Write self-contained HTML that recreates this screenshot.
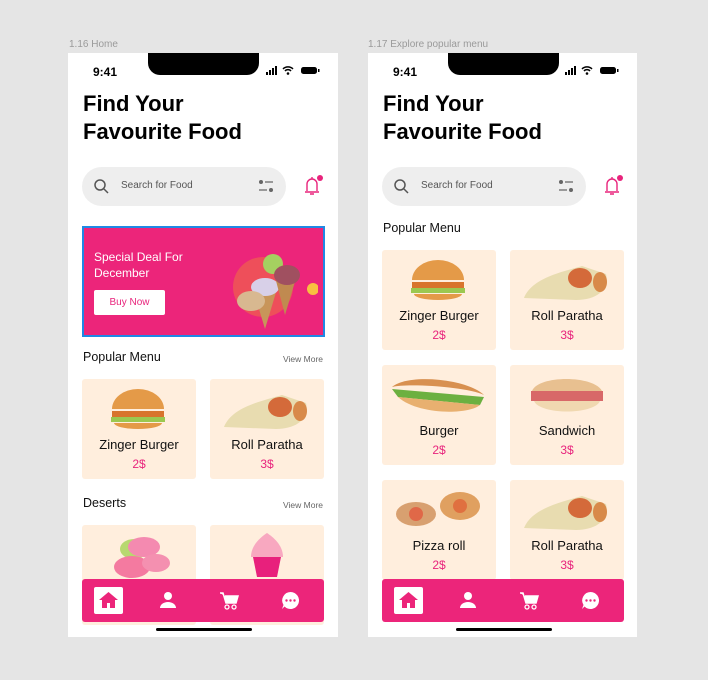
<!DOCTYPE html><html><head><style>
*{margin:0;padding:0;box-sizing:border-box}
body{width:708px;height:680px;background:#e5e5e5;font-family:"Liberation Sans",sans-serif;position:relative;overflow:hidden}
.lbl{position:absolute;top:39px;font-size:10px;color:#9a9a9a}
.ph{position:absolute;top:53px;width:270px;height:584px;background:#fff;overflow:hidden}
.notch{position:absolute;left:80px;top:0;width:111px;height:22px;background:#000;border-radius:0 0 12px 12px}
.time{position:absolute;left:25px;top:12px;font-size:12px;font-weight:bold}
.st{position:absolute;right:18px;top:13px}
h1{position:absolute;left:15px;top:37px;font-size:22px;line-height:28px;font-weight:bold;color:#000}
.search{position:absolute;left:14px;top:114px;width:204px;height:39px;background:#eee;border-radius:20px}
.search span{position:absolute;left:39px;top:13px;font-size:10px;color:#555}
.abs{position:absolute}
.sec{position:absolute;left:15px;font-size:12.5px;color:#111}
.vm{position:absolute;right:15px;font-size:8.5px;color:#666}
.card{position:absolute;width:114px;height:100px;background:#ffeedd;border-radius:3px;text-align:center}
.card .n{position:absolute;left:0;right:0;top:58px;font-size:13px;color:#111}
.card .p{position:absolute;left:0;right:0;top:78px;font-size:12px;color:#e8247c}
.nav{position:absolute;left:14px;top:526px;width:242px;height:43px;background:#ec257a;border-radius:3px}
.home{position:absolute;left:12px;top:8px;width:29px;height:27px;background:#fff;border-radius:2px}
.bar{position:absolute;left:88px;top:575px;width:96px;height:3px;background:#000;border-radius:2px}
</style></head><body>
<div class="lbl" style="left:69px">1.16 Home</div>
<div class="lbl" style="left:368px">1.17 Explore popular menu</div>

<!-- phone template -->
<div class="ph" style="left:68px">
<div class="notch"></div><div class="time">9:41</div>
<svg class="st" width="54" height="9" viewBox="0 0 54 9"><rect x="0" y="6" width="2" height="3"/><rect x="3" y="4" width="2" height="5"/><rect x="6" y="2" width="2" height="7"/><rect x="9" y="0" width="2" height="9"/><path d="M17 3a7 7 0 0 1 10 0M19 5a4 4 0 0 1 6 0" stroke="#000" stroke-width="1.5" fill="none"/><circle cx="22" cy="7.5" r="1.3"/><rect x="35" y="1" width="16" height="7" rx="2.5"/><rect x="52" y="3" width="1.5" height="3"/></svg>
<h1>Find Your<br>Favourite Food</h1>
<div class="search"><svg class="abs" style="left:12px;top:12px" width="15" height="15"><circle cx="6" cy="6" r="5" stroke="#555" stroke-width="1.5" fill="none"/><path d="M10 10l4 4" stroke="#555" stroke-width="1.5"/></svg><span>Search for Food</span><svg class="abs" style="left:176px;top:12px" width="16" height="15"><circle cx="3" cy="3" r="2" fill="#666"/><rect x="7" y="2" width="8" height="2" fill="#999"/><rect x="1" y="10" width="8" height="2" fill="#999"/><circle cx="13" cy="11" r="2" fill="#666"/></svg></div>
<svg class="abs" style="left:233px;top:120px" width="24" height="24"><path d="M4 19h14M6 18v-7a5 5 0 0 1 10 0v7M11 4v2M9 21h4" stroke="#e8247c" stroke-width="1.4" fill="none"/><circle cx="19" cy="5" r="3" fill="#e8247c"/></svg>
<div class="abs" style="left:14px;top:173px;width:243px;height:111px;background:#ec257a;border:2px solid #1e88e5"></div>
<div class="abs" style="left:26px;top:196px;color:#fff;font-size:12px;line-height:16px">Special Deal For<br>December</div>
<div class="abs" style="left:26px;top:237px;width:71px;height:25px;background:#fff;border-radius:2px;color:#e8247c;font-size:10px;text-align:center;line-height:25px">Buy Now</div>
<svg class="abs" style="left:145px;top:176px" width="105" height="104"><circle cx="50" cy="58" r="30" fill="#f07a3a" opacity=".5"/><circle cx="60" cy="35" r="10" fill="#a5d060"/><path d="M40 60l12 40 12-40z" fill="#c8955a"/><ellipse cx="52" cy="58" rx="14" ry="9" fill="#d8d0e8"/><path d="M62 48l10 38 12-40z" fill="#c08a50"/><ellipse cx="74" cy="46" rx="13" ry="10" fill="#a05060"/><ellipse cx="38" cy="72" rx="14" ry="10" fill="#d8b890"/><circle cx="100" cy="60" r="6" fill="#f8c040"/></svg>
<div class="sec" style="top:297px">Popular Menu</div><div class="vm" style="top:301px">View More</div>
<div class="card" style="left:14px;top:326px"><svg class="abs" style="left:26px;top:6px" width="60" height="48"><path d="M4 24a26 20 0 0 1 52 0z" fill="#e49a48"/><rect x="4" y="26" width="52" height="6" fill="#d8742c"/><rect x="3" y="32" width="54" height="5" fill="#9bc850"/><path d="M6 38h48a24 6 0 0 1-48 0z" fill="#e49a48"/></svg><div class="n">Zinger Burger</div><div class="p">2$</div></div>
<div class="card" style="left:142px;top:326px"><svg class="abs" style="left:12px;top:8px" width="90" height="45"><path d="M2 40C10 20 40 14 60 8l24 8c4 16-10 26-30 26z" fill="#e8dcb0"/><ellipse cx="58" cy="20" rx="12" ry="10" fill="#d46a3a"/><ellipse cx="78" cy="24" rx="7" ry="10" fill="#d88a4a"/></svg><div class="n">Roll Paratha</div><div class="p">3$</div></div>
<div class="sec" style="top:443px">Deserts</div><div class="vm" style="top:447px">View More</div>
<div class="card" style="left:14px;top:472px"><svg class="abs" style="left:30px;top:6px" width="60" height="50"><ellipse cx="22" cy="18" rx="14" ry="10" fill="#b8d870"/><ellipse cx="32" cy="16" rx="16" ry="10" fill="#f48ab0"/><ellipse cx="20" cy="36" rx="18" ry="11" fill="#f47aa0"/><ellipse cx="44" cy="32" rx="14" ry="9" fill="#f490b0"/></svg></div>
<div class="card" style="left:142px;top:472px"><svg class="abs" style="left:37px;top:6px" width="40" height="50"><path d="M6 26h28l-4 20H10z" fill="#e8207c"/><path d="M4 26C4 14 14 6 20 2c6 4 16 12 16 24z" fill="#f8a8c0"/></svg></div>
<div class="nav"><div class="home"></div><svg class="abs" style="left:17px;top:13px" width="19" height="17"><path d="M9.5 0L0 8h3v8h5v-5h3v5h5V8h3z" fill="#ec257a"/></svg>
<svg class="abs" style="left:77px;top:12px" width="18" height="18"><circle cx="9" cy="5" r="4" fill="#fff"/><path d="M1 17a8 6 0 0 1 16 0z" fill="#fff"/></svg>
<svg class="abs" style="left:137px;top:12px" width="20" height="19"><path d="M1 2h3l3 10h10l2-7H6" fill="#fff" stroke="#fff" stroke-width="1.5"/><circle cx="8" cy="16" r="2" fill="none" stroke="#fff" stroke-width="1.3"/><circle cx="15" cy="16" r="2" fill="none" stroke="#fff" stroke-width="1.3"/></svg>
<svg class="abs" style="left:199px;top:12px" width="19" height="19"><path d="M9.5 1a8.5 8.5 0 1 1-6 14.5L1 18l1.5-4A8.5 8.5 0 0 1 9.5 1z" fill="#fff"/><circle cx="5.5" cy="9.5" r="1.2" fill="#ec257a"/><circle cx="9.5" cy="9.5" r="1.2" fill="#ec257a"/><circle cx="13.5" cy="9.5" r="1.2" fill="#ec257a"/></svg></div>
<div class="bar"></div>
</div>

<div class="ph" style="left:368px;width:269px">
<div class="notch"></div><div class="time">9:41</div>
<svg class="st" width="54" height="9" viewBox="0 0 54 9"><rect x="0" y="6" width="2" height="3"/><rect x="3" y="4" width="2" height="5"/><rect x="6" y="2" width="2" height="7"/><rect x="9" y="0" width="2" height="9"/><path d="M17 3a7 7 0 0 1 10 0M19 5a4 4 0 0 1 6 0" stroke="#000" stroke-width="1.5" fill="none"/><circle cx="22" cy="7.5" r="1.3"/><rect x="35" y="1" width="16" height="7" rx="2.5"/><rect x="52" y="3" width="1.5" height="3"/></svg>
<h1>Find Your<br>Favourite Food</h1>
<div class="search"><svg class="abs" style="left:12px;top:12px" width="15" height="15"><circle cx="6" cy="6" r="5" stroke="#555" stroke-width="1.5" fill="none"/><path d="M10 10l4 4" stroke="#555" stroke-width="1.5"/></svg><span>Search for Food</span><svg class="abs" style="left:176px;top:12px" width="16" height="15"><circle cx="3" cy="3" r="2" fill="#666"/><rect x="7" y="2" width="8" height="2" fill="#999"/><rect x="1" y="10" width="8" height="2" fill="#999"/><circle cx="13" cy="11" r="2" fill="#666"/></svg></div>
<svg class="abs" style="left:233px;top:120px" width="24" height="24"><path d="M4 19h14M6 18v-7a5 5 0 0 1 10 0v7M11 4v2M9 21h4" stroke="#e8247c" stroke-width="1.4" fill="none"/><circle cx="19" cy="5" r="3" fill="#e8247c"/></svg>
<div class="sec" style="top:168px">Popular Menu</div>
<div class="card" style="left:14px;top:197px"><svg class="abs" style="left:26px;top:6px" width="60" height="48"><path d="M4 24a26 20 0 0 1 52 0z" fill="#e49a48"/><rect x="4" y="26" width="52" height="6" fill="#d8742c"/><rect x="3" y="32" width="54" height="5" fill="#9bc850"/><path d="M6 38h48a24 6 0 0 1-48 0z" fill="#e49a48"/></svg><div class="n">Zinger Burger</div><div class="p">2$</div></div>
<div class="card" style="left:142px;top:197px"><svg class="abs" style="left:12px;top:8px" width="90" height="45"><path d="M2 40C10 20 40 14 60 8l24 8c4 16-10 26-30 26z" fill="#e8dcb0"/><ellipse cx="58" cy="20" rx="12" ry="10" fill="#d46a3a"/><ellipse cx="78" cy="24" rx="7" ry="10" fill="#d88a4a"/></svg><div class="n">Roll Paratha</div><div class="p">3$</div></div>
<div class="card" style="left:14px;top:312px"><svg class="abs" style="left:6px;top:8px" width="100" height="45"><path d="M4 14C20 0 80 6 96 22 80 14 20 10 4 14z" fill="#d89050"/><path d="M4 16l92 8-4 8L10 24z" fill="#6cb040"/><path d="M10 24c20 18 70 18 82 8z" fill="#e8b070"/></svg><div class="n">Burger</div><div class="p">2$</div></div>
<div class="card" style="left:142px;top:312px"><svg class="abs" style="left:18px;top:10px" width="78" height="42"><path d="M4 16C10 0 66 0 74 16z" fill="#e8c090"/><rect x="3" y="16" width="72" height="10" fill="#d86868"/><path d="M6 26h66c-6 14-60 14-66 0z" fill="#f0d8b0"/></svg><div class="n">Sandwich</div><div class="p">3$</div></div>
<div class="card" style="left:14px;top:427px"><svg class="abs" style="left:12px;top:8px" width="90" height="44"><ellipse cx="22" cy="26" rx="20" ry="12" fill="#d8a070"/><circle cx="22" cy="26" r="7" fill="#e06848"/><ellipse cx="66" cy="18" rx="20" ry="14" fill="#e0a060"/><circle cx="66" cy="18" r="7" fill="#e07040"/></svg><div class="n">Pizza roll</div><div class="p">2$</div></div>
<div class="card" style="left:142px;top:427px"><svg class="abs" style="left:12px;top:8px" width="90" height="45"><path d="M2 40C10 20 40 14 60 8l24 8c4 16-10 26-30 26z" fill="#e8dcb0"/><ellipse cx="58" cy="20" rx="12" ry="10" fill="#d46a3a"/><ellipse cx="78" cy="24" rx="7" ry="10" fill="#d88a4a"/></svg><div class="n">Roll Paratha</div><div class="p">3$</div></div>
<div class="nav"><div class="home"></div><svg class="abs" style="left:17px;top:13px" width="19" height="17"><path d="M9.5 0L0 8h3v8h5v-5h3v5h5V8h3z" fill="#ec257a"/></svg>
<svg class="abs" style="left:77px;top:12px" width="18" height="18"><circle cx="9" cy="5" r="4" fill="#fff"/><path d="M1 17a8 6 0 0 1 16 0z" fill="#fff"/></svg>
<svg class="abs" style="left:137px;top:12px" width="20" height="19"><path d="M1 2h3l3 10h10l2-7H6" fill="#fff" stroke="#fff" stroke-width="1.5"/><circle cx="8" cy="16" r="2" fill="none" stroke="#fff" stroke-width="1.3"/><circle cx="15" cy="16" r="2" fill="none" stroke="#fff" stroke-width="1.3"/></svg>
<svg class="abs" style="left:199px;top:12px" width="19" height="19"><path d="M9.5 1a8.5 8.5 0 1 1-6 14.5L1 18l1.5-4A8.5 8.5 0 0 1 9.5 1z" fill="#fff"/><circle cx="5.5" cy="9.5" r="1.2" fill="#ec257a"/><circle cx="9.5" cy="9.5" r="1.2" fill="#ec257a"/><circle cx="13.5" cy="9.5" r="1.2" fill="#ec257a"/></svg></div>
<div class="bar"></div>
</div>
</body></html>
